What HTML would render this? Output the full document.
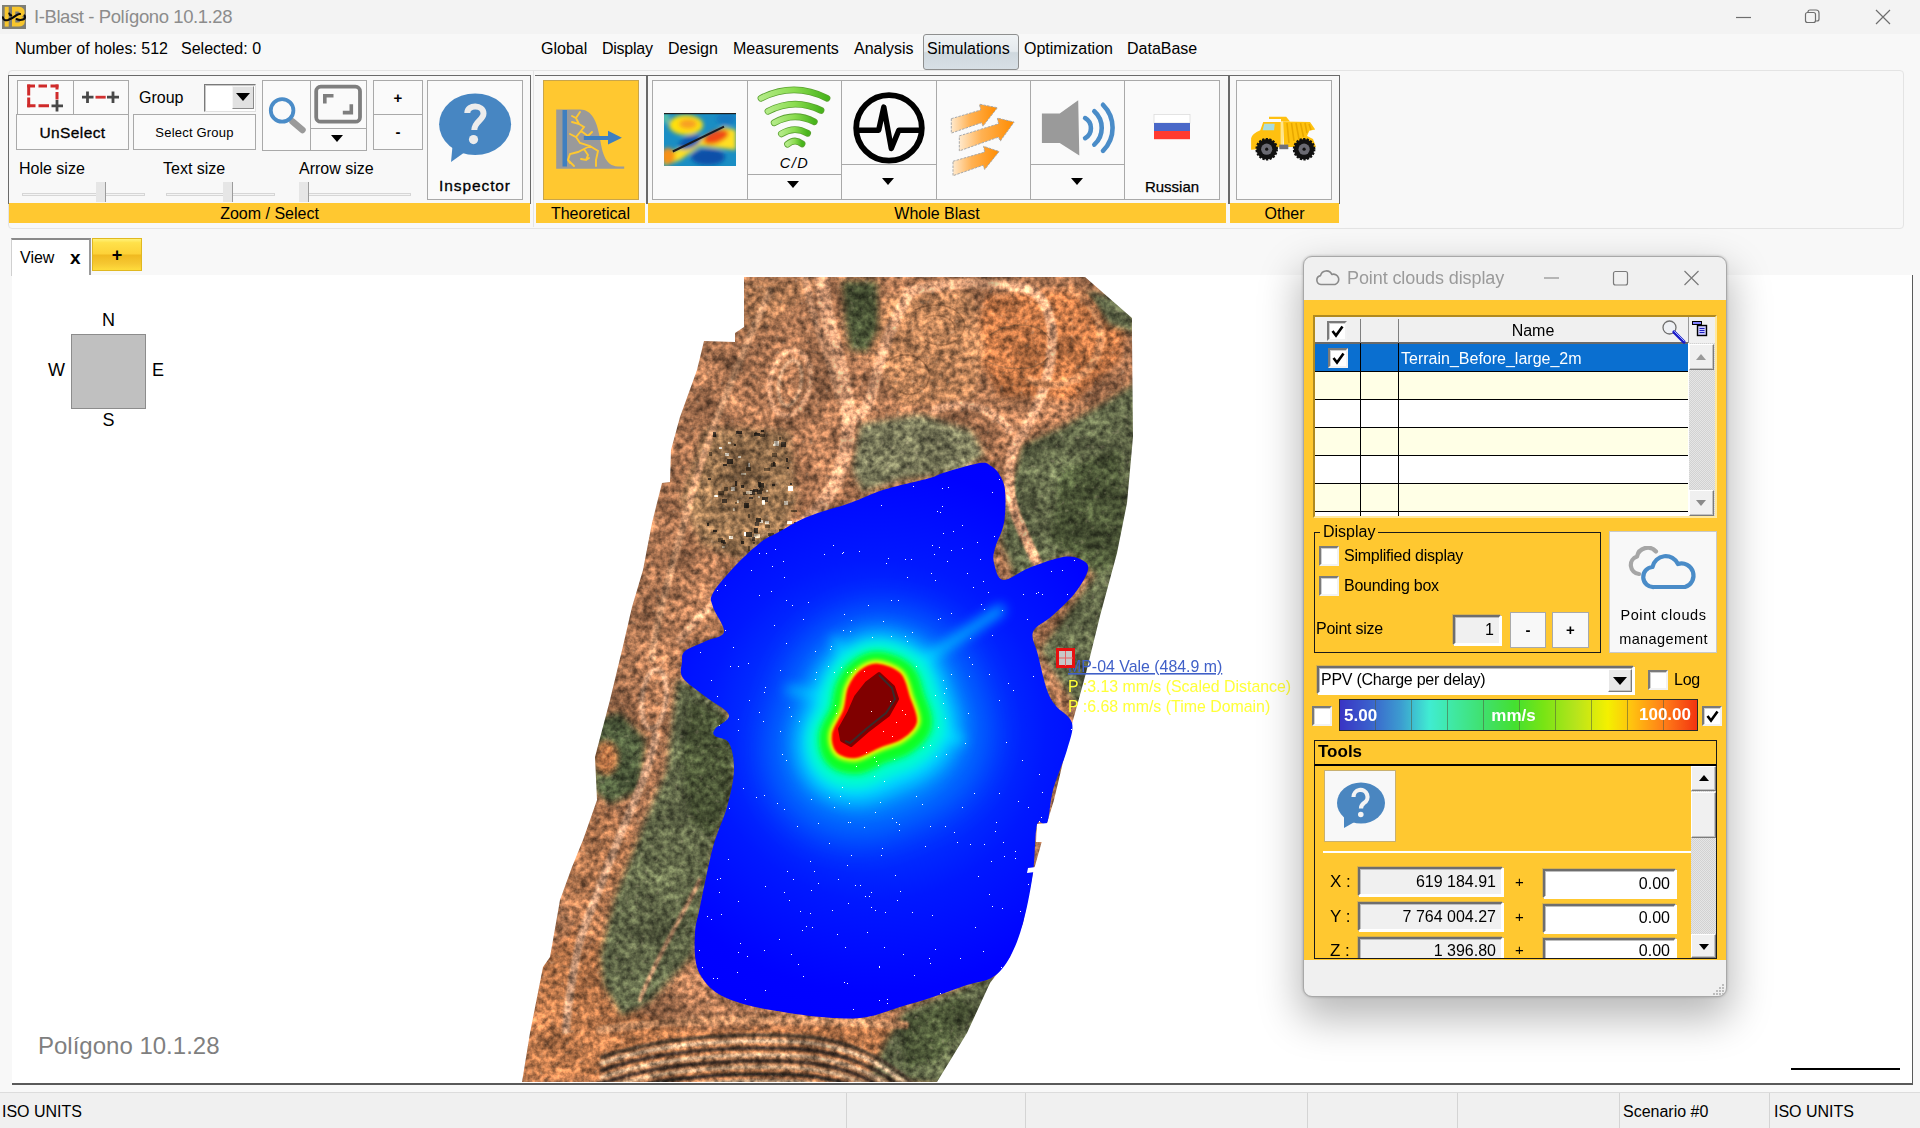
<!DOCTYPE html>
<html><head><meta charset="utf-8">
<style>
*{box-sizing:border-box;margin:0;padding:0}
html,body{width:1920px;height:1128px;overflow:hidden;background:#f8f8f8;font-family:"Liberation Sans",sans-serif;font-size:16px;color:#000}
.abs,.abs *{position:absolute}
#root{position:absolute;left:0;top:0;width:1920px;height:1128px;overflow:hidden}
.t{white-space:nowrap;line-height:1}
/* title bar */
#titlebar{left:0;top:0;width:1920px;height:34px;background:#f3f3f3}
/* ribbon */
#ribbon{left:8px;top:70px;width:1896px;height:159px;border:1px solid #e4e4e4;border-radius:4px;background:#f8f8f8}
.grp{border:1px solid #6a6a6a;border-bottom:none;background:#f8f8f8}
.gbar{background:#ffc830;height:20px;text-align:center;font-size:16px;line-height:22px}
.btn{border:1px solid #a9a9a9;background:#fafafa}
.cm{font-family:"Liberation Sans",sans-serif}
/* status */
#status{left:0;top:1092px;width:1920px;height:36px;background:#f0f0f0;border-top:1px solid #dcdcdc}
#status .sep{top:0;width:1px;height:36px;background:#d4d4d4}
/* view */
#view{left:12px;top:275px;width:1901px;height:810px;background:#fff;border-right:1px solid #5a5a5a;border-bottom:2px solid #5a5a5a;overflow:hidden}
</style></head><body>
<div id="root" class="abs">

<!-- TITLE BAR -->
<div id="titlebar">
  <svg style="left:2px;top:5px" width="24" height="24" viewBox="0 0 24 24"><rect x="0" y="0" width="24" height="24" fill="#7e7e76"/><rect x="2.700" y="1.800" width="4" height="19.800" fill="#f8c62c"/><path d="M10 1.800 H17 Q22.600 2.200 22.600 7.500 Q22.600 11 19.500 11.800 Q23 12.800 22.800 16.500 Q22.500 21.600 16.500 21.600 H10 Z M13.300 6.500 V10 H16 Q17.800 9.800 17.800 8.200 Q17.800 6.600 16 6.500 Z M13.300 13.500 V17.500 H16.500 Q18.400 17.300 18.400 15.500 Q18.400 13.600 16.500 13.500 Z" fill="#f8c62c" fill-rule="evenodd"/><path d="M0.800 12.200 Q1.500 16 6 15 Q10 13.500 13.500 10.800 Q16.500 8.600 18 9 M7.300 8.600 Q7.800 10.600 9.200 10.400 M22.600 10.500 Q24.200 14.800 18.500 15 Q16 15 14.800 14.200" fill="none" stroke="#0a0a0a" stroke-width="2.100" stroke-linecap="round"/></svg>
  <div class="t" style="left:34px;top:8px;font-size:18.5px;letter-spacing:-0.41px;color:#8c8c8c">I-Blast - Polígono 10.1.28</div>
  <svg style="left:1734px;top:8px" width="160" height="20" viewBox="0 0 160 20" fill="none" stroke="#6e6e6e" stroke-width="1.2"><path d="M2 9.500 H17"/><rect x="71.500" y="4.500" width="10" height="10" rx="2"/><path d="M74 4.500 v-1 a2 2 0 0 1 2 -1.500 h6 a3 3 0 0 1 3 3 v6 a2 2 0 0 1 -2 2 h-1"/><path d="M142 2 L156 16 M156 2 L142 16"/></svg>
</div>

<!-- MENU ROW -->
<div id="menurow" style="left:0;top:34px;width:1920px;height:36px">
  <div class="t" style="left:15px;top:7px">Number of holes: 512</div>
  <div class="t" style="left:181px;top:7px">Selected: 0</div>
  <div style="left:923px;top:0px;width:96px;height:36px;border:1px solid #8e8f8f;border-radius:3px;background:linear-gradient(#f0f3f5 0%,#e4e9ed 48%,#cfd8de 52%,#d8e0e6 100%)"></div>
  <div class="t" style="left:541px;top:7px">Global</div>
  <div class="t" style="left:602px;top:7px;letter-spacing:-0.25px">Display</div>
  <div class="t" style="left:668px;top:7px">Design</div>
  <div class="t" style="left:733px;top:7px">Measurements</div>
  <div class="t" style="left:854px;top:7px">Analysis</div>
  <div class="t" style="left:927px;top:7px">Simulations</div>
  <div class="t" style="left:1024px;top:7px">Optimization</div>
  <div class="t" style="left:1127px;top:7px">DataBase</div>
</div>

<!-- RIBBON -->
<div id="ribbon"></div>
<!-- GROUP 1: Zoom / Select -->
<div class="grp" style="left:8px;top:75px;width:523px;height:129px"></div>
<div class="gbar" style="left:9px;top:203px;width:521px">Zoom / Select</div>
<div class="btn" style="left:17px;top:80px;width:57px;height:35px"></div>
<div class="btn" style="left:73px;top:80px;width:56px;height:35px"></div>
<div class="btn" style="left:16px;top:114px;width:113px;height:36px"></div>
<div class="t cm" style="left:16px;top:125px;width:113px;text-align:center;font-size:15.5px;-webkit-text-stroke:0.3px #000;letter-spacing:0.4px">UnSelect</div>
<div class="t" style="left:139px;top:90px">Group</div>
<div style="left:204px;top:84px;width:52px;height:28px;background:#fff;border:1px solid #7a7a7a;border-right-color:#e0e0e0;border-bottom-color:#e0e0e0;box-shadow:inset 1px 1px 0 #c8c8c8"></div>
<div style="left:232px;top:86px;width:22px;height:23px;background:#e1e1e1;border:1px solid #f5f5f5;border-right-color:#8a8a8a;border-bottom-color:#8a8a8a"></div>
<svg style="left:236px;top:93px" width="14" height="8"><path d="M0 0 H14 L7 8 Z" fill="#000"/></svg>
<div class="btn" style="left:133px;top:114px;width:123px;height:36px"></div>
<div class="t cm" style="left:133px;top:126px;width:123px;text-align:center;font-size:13px;letter-spacing:0.2px">Select Group</div>
<div class="btn" style="left:262px;top:80px;width:49px;height:71px"></div>
<div class="btn" style="left:310px;top:80px;width:57px;height:49px"></div>
<div class="btn" style="left:310px;top:128px;width:57px;height:23px"></div>
<svg style="left:331px;top:135px" width="12" height="7"><path d="M0 0 H12 L6 7 Z" fill="#000"/></svg>
<div class="btn" style="left:373px;top:80px;width:50px;height:35px"></div>
<div class="btn" style="left:373px;top:114px;width:50px;height:36px"></div>
<div class="t" style="left:373px;top:90px;width:50px;text-align:center;font-size:15px;font-weight:bold">+</div>
<div class="t" style="left:373px;top:124px;width:50px;text-align:center;font-size:15px;font-weight:bold">-</div>
<div class="btn" style="left:427px;top:80px;width:96px;height:120px"></div>
<div class="t cm" style="left:427px;top:178px;width:96px;text-align:center;font-size:15.5px;-webkit-text-stroke:0.3px #000;letter-spacing:0.9px">Inspector</div>
<div class="t" style="left:19px;top:161px">Hole size</div>
<div class="t" style="left:163px;top:161px">Text size</div>
<div class="t" style="left:299px;top:161px">Arrow size</div>
<!-- sliders -->
<div style="left:22px;top:193px;width:123px;height:3px;background:#f4f4f4;border:1px solid #d6d6d6"></div>
<div style="left:96px;top:182px;width:10px;height:20px;background:#e6e6e6;border-right:1px solid #9c9c9c"></div>
<div style="left:166px;top:193px;width:109px;height:3px;background:#f4f4f4;border:1px solid #d6d6d6"></div>
<div style="left:223px;top:182px;width:10px;height:20px;background:#e6e6e6;border-right:1px solid #9c9c9c"></div>
<div style="left:299px;top:193px;width:112px;height:3px;background:#f4f4f4;border:1px solid #d6d6d6"></div>
<div style="left:299px;top:182px;width:10px;height:20px;background:#e6e6e6;border-right:1px solid #9c9c9c"></div>
<!--ICONS-G1-->

<!-- GROUP 2: Theoretical -->
<div style="left:533px;top:71px;width:1px;height:156px;background:#e4e4e4"></div>
<div class="grp" style="left:535px;top:75px;width:112px;height:129px;border-left:none"></div>
<div class="gbar" style="left:536px;top:203px;width:109px">Theoretical</div>
<div style="left:543px;top:80px;width:96px;height:120px;background:#ffc830;border:1px solid #c9a54a"></div>
<!--ICONS-G2-->

<!-- GROUP 3: Whole Blast -->
<div class="grp" style="left:646px;top:75px;width:583px;height:129px;border-left-width:2px"></div>
<div class="gbar" style="left:648px;top:203px;width:578px">Whole Blast</div>
<div class="btn" style="left:652px;top:80px;width:96px;height:120px"></div>
<div class="btn" style="left:747px;top:80px;width:95px;height:95px"></div>
<div class="btn" style="left:747px;top:174px;width:95px;height:26px"></div>
<div class="btn" style="left:841px;top:80px;width:96px;height:85px"></div>
<div class="btn" style="left:841px;top:164px;width:96px;height:36px"></div>
<div class="btn" style="left:936px;top:80px;width:95px;height:120px"></div>
<div class="btn" style="left:1030px;top:80px;width:95px;height:85px"></div>
<div class="btn" style="left:1030px;top:164px;width:95px;height:36px"></div>
<div class="btn" style="left:1124px;top:80px;width:96px;height:120px"></div>
<svg style="left:787px;top:181px" width="12" height="7"><path d="M0 0 H12 L6 7 Z" fill="#000"/></svg>
<svg style="left:882px;top:178px" width="12" height="7"><path d="M0 0 H12 L6 7 Z" fill="#000"/></svg>
<svg style="left:1071px;top:178px" width="12" height="7"><path d="M0 0 H12 L6 7 Z" fill="#000"/></svg>
<div class="t cm" style="left:747px;top:156px;width:95px;text-align:center;font-size:14.5px;letter-spacing:1.5px;font-style:italic">C/D</div>
<div class="t cm" style="left:1124px;top:179px;width:96px;text-align:center;font-size:15px;-webkit-text-stroke:0.25px #000;letter-spacing:0px">Russian</div>
<!--ICONS-G3-->

<!-- GROUP 4: Other -->
<div class="grp" style="left:1228px;top:75px;width:112px;height:129px;border-left-width:2px"></div>
<div class="gbar" style="left:1230px;top:203px;width:109px">Other</div>
<div class="btn" style="left:1236px;top:80px;width:96px;height:120px"></div>
<!--ICONS-START--><svg style="left:0;top:0;pointer-events:none" width="1920" height="240" viewBox="0 0 1920 240">
<defs>
<linearGradient id="og" x1="0" y1="0" x2="1" y2="0"><stop offset="0" stop-color="#ffe9cc"/><stop offset="0.4" stop-color="#ffb254"/><stop offset="1" stop-color="#ff8c00"/></linearGradient>
<linearGradient id="gg" x1="0" y1="0" x2="1" y2="0"><stop offset="0" stop-color="#b2ea86"/><stop offset="0.5" stop-color="#8bdc50"/><stop offset="1" stop-color="#48b41c"/></linearGradient>
<clipPath id="cmc"><rect x="664" y="113" width="72" height="53"/></clipPath>
<filter id="ib3" x="-50%" y="-50%" width="200%" height="200%"><feGaussianBlur stdDeviation="2.2"/></filter>
<filter id="ib5" x="-50%" y="-50%" width="200%" height="200%"><feGaussianBlur stdDeviation="2"/></filter>
</defs>
<g fill="none" stroke="#cf2a2a" stroke-width="3">
<path d="M27.200 86 H35 M38.500 86 H47 M50.500 86 H58.500"/>
<path d="M28.700 84.500 V95.500 M28.700 97.500 V107.300"/>
<path d="M57 84.500 V89.500 M57 92 V99.500"/>
<path d="M27.200 105.800 H35.500 M38.500 105.800 H49"/>
</g>
<path d="M51.500 105.800 H63 M57 100 V111.500" stroke="#484848" stroke-width="2.800" fill="none"/>
<path d="M82 97.200 H93.500 M87.500 91.500 V103 M107 97.200 H119 M113 91.500 V103" stroke="#484848" stroke-width="2.800" fill="none"/>
<path d="M95.500 97.200 H105.700" stroke="#d03030" stroke-width="2.800"/>
<path d="M292.500 121.500 L302.500 130" stroke="#9a9a9a" stroke-width="6.500" stroke-linecap="round"/>
<circle cx="282.100" cy="110.400" r="11.300" fill="#fafafa" stroke="#4a8cc8" stroke-width="3.800"/>
<rect x="316.200" y="86.700" width="43.800" height="35" rx="4.500" fill="none" stroke="#7e7e7e" stroke-width="3.800"/>
<path d="M324.800 103.600 V95.700 H333.500 M351.300 104.300 V112.600 H342.800" fill="none" stroke="#7e7e7e" stroke-width="3.600"/>
<ellipse cx="475.100" cy="124.200" rx="36" ry="30.800" fill="#4786c2"/><path d="M452.500 146 L451 162 L465 152 Z" fill="#4786c2"/>
<path d="M467.300 113 C467.300 104 483.500 104.500 483.500 113.500 C483.500 120 474.300 121.500 474.300 130" fill="none" stroke="#ececec" stroke-width="6"/>
<circle cx="473.500" cy="139.600" r="4.600" fill="#ececec"/>
<path d="M556.200 109.400 H580 C592 109.400 597 122 599.500 136 C602 150 604 166 618 166.500 H624.200 V168.800 H556.200 Z" fill="#9a9a9a"/>
<rect x="562.500" y="110" width="4.500" height="56.500" fill="#3f7fc0"/>
<g fill="none" stroke="#ffc830" stroke-width="1.900" stroke-linecap="round">
<path d="M580 112 L576 118 L572 116 M576 118 L579 124 L572 122 M579 124 L584 127 L581 131 L588 136 L592 132 M581 131 L576 137 L570 134 M576 137 L580 143 L590 146 L598 151 L596 160 L596 166 M590 146 L584 149 L578 152 L570 154 L568 160 L574 166 M568 160 L570 163 M584 149 L588 155 L586 160 L581 159 M586 160 L589 158"/>
</g>
<path d="M583.800 135.900 H608 V130.800 L621.900 137.700 L608 144.600 V140 H583.800 Z" fill="#3f7fc0"/>
<g clip-path="url(#cmc)">
<rect x="664" y="113" width="72" height="53" fill="#1a8ec4"/>
<g filter="url(#ib3)">
<ellipse cx="686" cy="125" rx="17" ry="10" fill="#ffe010"/>
<ellipse cx="688" cy="124" rx="9" ry="5" fill="#f8a020"/>
<polygon points="672,152 724,127 736,130 736,150 700,146 680,160 664,166 664,150" fill="#ffe020"/>
<ellipse cx="716" cy="137" rx="13" ry="6" fill="#f04818" transform="rotate(-20 716 137)"/>
<ellipse cx="668" cy="156" rx="7" ry="8" fill="#f89018"/>
<ellipse cx="708" cy="157" rx="17" ry="8" fill="#0a50a8"/>
<ellipse cx="690" cy="142" rx="12" ry="6" fill="#0a58b0" transform="rotate(-25 690 142)"/>
<ellipse cx="726" cy="119" rx="10" ry="6" fill="#1478c0"/>
<ellipse cx="666" cy="118" rx="3" ry="6" fill="#60c8a0"/>
</g>
<path d="M672.800 151.500 L724 126.700" stroke="#1a1a20" stroke-width="2"/>
<rect x="664" y="113" width="72" height="1.200" fill="#202020"/>
</g>
<path d="M761 98.2 Q794.0 81.6 827 98.2" fill="none" stroke="#5aa030" stroke-width="6.800" stroke-linecap="round"/>
<path d="M761 98.2 Q794.0 81.6 827 98.2" fill="none" stroke="url(#gg)" stroke-width="5.200" stroke-linecap="round"/>
<path d="M768 111.2 Q794.5 97.4 821 110.4" fill="none" stroke="#5aa030" stroke-width="6.800" stroke-linecap="round"/>
<path d="M768 111.2 Q794.5 97.4 821 110.4" fill="none" stroke="url(#gg)" stroke-width="5.200" stroke-linecap="round"/>
<path d="M774.2 122.8 Q794.2 111.3 814.3 121.8" fill="none" stroke="#5aa030" stroke-width="6.800" stroke-linecap="round"/>
<path d="M774.2 122.8 Q794.2 111.3 814.3 121.8" fill="none" stroke="url(#gg)" stroke-width="5.200" stroke-linecap="round"/>
<path d="M781.4 133.8 Q794.5 125.6 807.6 133.3" fill="none" stroke="#5aa030" stroke-width="6.800" stroke-linecap="round"/>
<path d="M781.4 133.8 Q794.5 125.6 807.6 133.3" fill="none" stroke="url(#gg)" stroke-width="5.200" stroke-linecap="round"/>
<path d="M787.6 144.2 Q794.8 138.2 802 143.8" fill="none" stroke="#5aa030" stroke-width="6.800" stroke-linecap="round"/>
<path d="M787.6 144.2 Q794.8 138.2 802 143.8" fill="none" stroke="url(#gg)" stroke-width="5.200" stroke-linecap="round"/>
<circle cx="889" cy="127.900" r="32.800" fill="none" stroke="#000" stroke-width="5.800"/>
<path d="M858.500 130.200 H878.700 L883.800 107.100 L891.300 148.600 L898.800 130.200 H919" fill="none" stroke="#000" stroke-width="5.400" stroke-linejoin="round" stroke-linecap="round"/>
<polygon points="951.3,118.7 980.7,110 979.5,104.2 997.4,107.7 983,126.1 981.5,122.7 951.3,133.1" fill="url(#og)" stroke="#a8a8a8" stroke-width="1" stroke-dasharray="2.500 1.200"/>
<polygon points="959.3,135.9 998.5,123.8 997.4,118.1 1014.1,122.1 1000.3,141.1 998.5,137.1 959.3,150.9" fill="url(#og)" stroke="#a8a8a8" stroke-width="1" stroke-dasharray="2.500 1.200"/>
<polygon points="953,161.3 984.7,152.1 983.6,146.3 999.1,151.5 984.7,169.4 983,165.3 953,175.7" fill="url(#og)" stroke="#a8a8a8" stroke-width="1" stroke-dasharray="2.500 1.200"/>
<polygon points="1041.9,113.500 1059.700,113.500 1078.200,100.200 1079.300,155.500 1059.700,142.900 1041.900,142.900" fill="#9a9a9a"/>
<g fill="none" stroke="#4a8cc8" stroke-width="4.600" stroke-linecap="round">
<path d="M1085.100 118.100 A11.600 11.600 0 0 1 1085.100 138.200"/>
<path d="M1094.300 111.200 A22.500 22.500 0 0 1 1094.300 144.600"/>
<path d="M1103 104.800 A32.500 32.500 0 0 1 1103 150.900"/>
</g>
<rect x="1154" y="114.500" width="36" height="8.500" fill="#ffffff" stroke="#dcdcdc" stroke-width="0.800"/><rect x="1154" y="123" width="36" height="8" fill="#4a68c8"/><rect x="1154" y="131" width="36" height="8.200" fill="#ff3a30"/>
<g>
<path d="M1269 116.800 H1286.200 L1290 121.500 H1281 V119 H1269 Z" fill="#ffc010"/>
<polygon points="1283,121.500 1310,122.100 1315.200,129.600 1309.300,130.800 1307,135.900 1313,139 1316,147 1284,147" fill="#ffc20e"/>
<g stroke="#e9a800" stroke-width="1.600"><path d="M1287 123 L1289 143 M1291.500 123 L1294 141 M1296 123 L1299 139 M1300.500 123 L1303.500 137 M1305 123 L1307 133 M1309 124 L1311 130"/></g>
<path d="M1251.100 149.800 L1251.100 138.200 Q1252 133.600 1260.300 130.200 L1263.200 122.100 H1281.600 V147 Z" fill="#ffc010"/>
<rect x="1280.600" y="122" width="2.600" height="23" fill="#ffe58a"/>
<polygon points="1264.300,123.800 1274.700,123.800 1274.100,130.200 1262.600,130.200" fill="#a8dce0"/>
<rect x="1279.300" y="144.600" width="9" height="4.600" fill="#70707a"/>
<circle cx="1266.7" cy="149.200" r="10.200" fill="#111" stroke="#111" stroke-width="2.200" stroke-dasharray="2.200 1.400"/>
<circle cx="1266.7" cy="149.200" r="5.600" fill="#6a6a72"/><circle cx="1266.7" cy="149.200" r="1.600" fill="#111"/>
<circle cx="1304.1" cy="149.200" r="10.200" fill="#111" stroke="#111" stroke-width="2.200" stroke-dasharray="2.200 1.400"/>
<circle cx="1304.1" cy="149.200" r="5.600" fill="#6a6a72"/><circle cx="1304.1" cy="149.200" r="1.600" fill="#111"/>
</g>
</svg><!--ICONS-END-->


<!-- TABS -->
<div style="left:11px;top:238px;width:80px;height:38px;background:#fff;border:1px solid #d0d0d0;border-top:2px solid #8a8a8a;border-right:2px solid #9a9a9a;border-bottom:none"></div>
<div class="t" style="left:20px;top:250px">View</div>
<div class="t" style="left:70px;top:248px;font-size:19px;font-weight:bold">x</div>
<div style="left:92px;top:238px;width:50px;height:33px;border:1px solid #e0b820;background:linear-gradient(#fff27a 0%,#ffe14a 12%,#fdd238 48%,#f0b920 52%,#f6c832 80%,#ffdc3c 100%)"></div>
<div class="t" style="left:92px;top:246px;width:50px;text-align:center;font-size:18px;font-weight:bold">+</div>


<!-- VIEW -->
<div id="view">
<!--MAP-START--><svg style="left:-12px;top:-275px" width="1920" height="1128" viewBox="0 0 1920 1128">
<defs>
<clipPath id="tc"><polygon points="744,277 1085,277 1132,318 1132,337 1133,437 1127,503 1117,553 1100,616 1086,673 1072,724 1054,800 1047,823 1033,873 1023,923 1010,957 990,983 967,1033 937,1082 522,1082 530,1033 543,967 550,957 560,900 572,867 583,840 597,800 595,757 610,700 623,646 632,607 643,570 652,523 662,483 670,482 671,450 680,417 697,370 704,341 735,342 735,333 744,327"/></clipPath>
<clipPath id="bc"><path d="M980,463 C988.0,461.8 987.8,464.2 991,466 C994.2,467.8 996.7,470.0 999,474 C1001.3,478.0 1004.2,481.8 1005,490 C1005.8,498.2 1005.7,513.3 1004,523 C1002.3,532.7 996.7,541.3 995,548 C993.3,554.7 992.7,557.7 994,563 C995.3,568.3 997.2,579.2 1003,580 C1008.8,580.8 1019.0,571.8 1029,568 C1039.0,564.2 1054.2,558.3 1063,557 C1071.8,555.7 1077.8,557.8 1082,560 C1086.2,562.2 1089.2,564.5 1088,570 C1086.8,575.5 1081.0,585.3 1075,593 C1069.0,600.7 1059.0,609.5 1052,616 C1045.0,622.5 1035.3,625.5 1033,632 C1030.7,638.5 1035.7,645.3 1038,655 C1040.3,664.7 1044.0,681.5 1047,690 C1050.0,698.5 1051.8,700.5 1056,706 C1060.2,711.5 1070.2,715.7 1072,723 C1073.8,730.3 1070.2,738.8 1067,750 C1063.8,761.2 1056.3,777.8 1053,790 C1049.7,802.2 1049.7,817.2 1047,823 C1044.3,828.8 1039.3,816.7 1037,825 C1034.7,833.3 1035.3,856.7 1033,873 C1030.7,889.3 1026.8,909.0 1023,923 C1019.2,937.0 1015.0,948.0 1010,957 C1005.0,966.0 1000.2,972.3 993,977 C985.8,981.7 977.0,981.7 967,985 C957.0,988.3 944.2,993.3 933,997 C921.8,1000.7 911.0,1003.7 900,1007 C889.0,1010.3 878.2,1015.2 867,1017 C855.8,1018.8 847.0,1018.8 833,1018 C819.0,1017.2 798.5,1014.5 783,1012 C767.5,1009.5 751.7,1006.7 740,1003 C728.3,999.3 720.2,996.0 713,990 C705.8,984.0 700.0,976.5 697,967 C694.0,957.5 694.5,943.0 695,933 C695.5,923.0 697.0,921.3 700,907 C703.0,892.7 708.5,863.7 713,847 C717.5,830.3 723.5,819.8 727,807 C730.5,794.2 733.7,780.7 734,770 C734.3,759.3 732.2,748.7 729,743 C725.8,737.3 717.3,738.3 715,736 C712.7,733.7 712.7,732.5 715,729 C717.3,725.5 730.5,720.3 729,715 C727.5,709.7 713.7,703.2 706,697 C698.3,690.8 687.0,683.8 683,678 C679.0,672.2 681.7,666.5 682,662 C682.3,657.5 681.0,654.5 685,651 C689.0,647.5 699.5,644.2 706,641 C712.5,637.8 722.8,637.7 724,632 C725.2,626.3 714.8,613.5 713,607 C711.2,600.5 709.2,600.0 713,593 C716.8,586.0 728.0,573.5 736,565 C744.0,556.5 754.2,547.3 761,542 C767.8,536.7 769.3,537.2 777,533 C784.7,528.8 794.8,522.0 807,517 C819.2,512.0 837.3,507.5 850,503 C862.7,498.5 869.7,494.2 883,490 C896.3,485.8 920.0,480.8 930,478 C940.0,475.2 934.7,475.5 943,473 C951.3,470.5 972.0,464.2 980,463Z"/></clipPath>
<filter id="tex" filterUnits="userSpaceOnUse" x="500" y="270" width="660" height="820" color-interpolation-filters="sRGB"><feTurbulence type="fractalNoise" baseFrequency="0.16" numOctaves="3" seed="5" result="n"/><feColorMatrix in="n" type="matrix" values="1.5 0 0 0 -0.25  1.5 0 0 0 -0.25  1.5 0 0 0 -0.25  0 0 0 0 1" result="g"/><feTurbulence type="fractalNoise" baseFrequency="0.025 0.035" numOctaves="3" seed="17" result="n2"/><feColorMatrix in="n2" type="matrix" values="0 1.4 0 0 -0.2  0 1.4 0 0 -0.2  0 1.4 0 0 -0.2  0 0 0 0 1" result="g2"/><feComposite in="SourceGraphic" in2="g" operator="arithmetic" k1="0.9" k2="0.55" k3="0" k4="0" result="t1"/><feComposite in="t1" in2="g2" operator="arithmetic" k1="0.6" k2="0.7" k3="0" k4="0"/></filter>
<filter id="nzL" x="0" y="0" width="100%" height="100%"><feTurbulence type="fractalNoise" baseFrequency="0.035 0.045" numOctaves="3" seed="11"/><feColorMatrix type="matrix" values="0 0 0 0 0.2  0 0 0 0 0.12  0 0 0 0 0.06  0 2.4 0 0 -1.1"/></filter>
<filter id="nzD" x="0" y="0" width="100%" height="100%"><feTurbulence type="fractalNoise" baseFrequency="0.16" numOctaves="2" seed="3"/><feColorMatrix type="matrix" values="0 0 0 0 0.17  0 0 0 0 0.12  0 0 0 0 0.07  2.6 0 0 0 -1.2"/></filter>
<filter id="nzH" x="0" y="0" width="100%" height="100%"><feTurbulence type="fractalNoise" baseFrequency="0.2" numOctaves="2" seed="29"/><feColorMatrix type="matrix" values="0 0 0 0 0.93  0 0 0 0 0.74  0 0 0 0 0.55  0 2.2 0 0 -1.38"/></filter>
<filter id="b3" filterUnits="userSpaceOnUse" x="480" y="250" width="700" height="860"><feGaussianBlur stdDeviation="3"/></filter><filter id="b6" filterUnits="userSpaceOnUse" x="480" y="250" width="700" height="860"><feGaussianBlur stdDeviation="6"/></filter><filter id="b10" filterUnits="userSpaceOnUse" x="480" y="250" width="700" height="860"><feGaussianBlur stdDeviation="10"/></filter><filter id="b18" filterUnits="userSpaceOnUse" x="480" y="250" width="700" height="860"><feGaussianBlur stdDeviation="18"/></filter><filter id="b1" filterUnits="userSpaceOnUse" x="480" y="250" width="700" height="860"><feGaussianBlur stdDeviation="1.2"/></filter><filter id="b2" filterUnits="userSpaceOnUse" x="480" y="250" width="700" height="860"><feGaussianBlur stdDeviation="2"/></filter>
<radialGradient id="bg" gradientUnits="userSpaceOnUse" cx="875" cy="730" r="310"><stop offset="0" stop-color="#00b0ff"/><stop offset="0.14" stop-color="#0070ff"/><stop offset="0.3" stop-color="#003cff"/><stop offset="0.55" stop-color="#0018ff"/><stop offset="0.85" stop-color="#0002ff"/><stop offset="1" stop-color="#0000ff"/></radialGradient>
</defs>
<g clip-path="url(#tc)"><g filter="url(#tex)">
<rect x="500" y="270" width="660" height="820" fill="#a87250"/>
<g filter="url(#b3)">
<polygon points="985,296 1075,290 1128,318 1120,360 1075,400 1000,396 975,350" fill="#c27444"/>
<polygon points="885,296 972,290 985,350 975,400 900,405 872,360" fill="#bd8258"/>
<polygon points="700,345 760,330 800,300 815,280 745,280 740,335" fill="#b47c54"/>
<polygon points="540,960 600,900 625,1010 700,1030 900,1020 930,1082 520,1082" fill="#b8744a"/>
<polygon points="560,880 600,800 640,840 620,900 585,960" fill="#b27650"/>
<polygon points="1022,445 1060,428 1100,405 1140,380 1140,660 1085,720 1040,650 1095,575 1075,552 1015,578 1000,540 1012,480" fill="#5e6646"/>
<polygon points="1060,470 1120,450 1130,560 1095,575 1050,540" fill="#4a5236"/>
<polygon points="842,281 877,281 880,330 868,352 850,350 845,320" fill="#4a5236"/>
<polygon points="860,424 920,414 972,430 985,455 960,472 900,480 862,492 852,470" fill="#7c7c5c"/>
<polygon points="1085,291 1136,300 1136,335 1108,326" fill="#5e6646"/>
<polygon points="677,679 705,690 725,711 740,740 736,770 730,810 717,837 701,915 693,955 650,1002 622,1018 602,985 599,955 614,896 638,837 666,770" fill="#5e6646"/>
<polygon points="690,700 730,720 735,790 715,840 690,820 680,760" fill="#4a5236"/>
<polygon points="595,719 620,712 646,740 640,790 610,805 593,790" fill="#4e5a3a"/>
<polygon points="868,1078 885,1040 905,1010 940,996 992,975 1002,985 960,1062 945,1085" fill="#5e6646"/>
<polygon points="900,1020 960,995 975,1010 940,1060 905,1070" fill="#4a5236"/>
<polygon points="705,426 790,430 798,500 780,545 740,560 700,545 680,500" fill="#94704e"/>
<ellipse cx="606" cy="758" rx="10" ry="15" fill="#e08a52"/>
</g>
<g fill="none" stroke-linecap="round" filter="url(#b1)">
<path d="M822,277 C824,320 838,352 845,388 C851,420 848,450 838,476 C828,505 790,540 745,585" stroke="#e4a47c" stroke-width="14"/>
<path d="M805,277 C812,320 830,360 838,395" stroke="#c8906c" stroke-width="7"/>
<path d="M912,290 C890,320 880,360 870,400 C866,410 860,416 852,420" stroke="#e4a47c" stroke-width="11"/>
<path d="M908,292 C940,282 1000,280 1030,290 C1050,300 1056,330 1050,363 C1045,395 1032,420 1015,445 C1005,470 1008,500 1020,525 C1028,545 1036,560 1040,570" stroke="#e4a47c" stroke-width="10"/>
<path d="M935,410 C960,400 990,405 1010,430" stroke="#e4a47c" stroke-width="8"/>
<path d="M1070,290 C1095,300 1110,330 1095,360 C1080,385 1050,390 1030,380" stroke="#d08a5c" stroke-width="8"/>
<ellipse cx="790" cy="383" rx="20" ry="33" stroke="#e4a47c" stroke-width="5" transform="rotate(10 790 383)"/>
<ellipse cx="790" cy="383" rx="11" ry="23" stroke="#c49a78" stroke-width="3" transform="rotate(10 790 383)"/>
<path d="M770,290 C745,350 712,420 690,500 C672,570 655,620 652,660" stroke="#c08c68" stroke-width="7"/>
<ellipse cx="654" cy="699" rx="12" ry="30" stroke="#c49474" stroke-width="5" transform="rotate(6 654 699)"/>
<path d="M656,735 C650,770 630,810 620,835 C605,875 590,910 580,940 C572,975 568,1000 566,1030" stroke="#c49474" stroke-width="8"/>
<path d="M700,880 C680,920 655,960 640,1000" stroke="#b88a68" stroke-width="4"/>
<path d="M740,590 C720,600 700,610 680,640" stroke="#e4a47c" stroke-width="8"/>
<path d="M600,1030 C700,1015 800,1020 905,1025" stroke="#c88c62" stroke-width="8"/>
</g>
<g fill="none" stroke="#8a5c3c" stroke-width="1.500" opacity="0.7">
<path d="M915,310 C935,300 960,305 965,325 C962,345 940,350 925,340"/><path d="M925,318 C940,312 955,318 955,330"/><path d="M890,360 C905,350 925,355 930,375 C928,392 912,398 900,392"/>
<path d="M990,335 C1010,320 1040,322 1050,340"/><path d="M985,360 C1005,372 1035,372 1048,358"/>
</g>
<g fill="none" filter="url(#b1)">
<path d="M600,1058 C650,1040 720,1032 800,1036 C850,1040 885,1058 915,1086" stroke="#4a3a2e" stroke-width="4"/>
<path d="M600,1064 C650,1046 720,1038 800,1042 C850,1046 885,1064 915,1092" stroke="#d2ae8c" stroke-width="4"/>
<path d="M600,1071 C650,1053 720,1045 800,1049 C850,1053 885,1071 915,1099" stroke="#3a2e26" stroke-width="4"/>
<path d="M600,1078 C650,1060 720,1052 800,1056 C850,1060 885,1078 915,1106" stroke="#caa684" stroke-width="4"/>
<path d="M600,1084 C650,1066 720,1058 800,1062 C850,1066 885,1084 915,1112" stroke="#40322a" stroke-width="4"/>
<path d="M600,1090 C650,1072 720,1064 800,1068 C850,1072 885,1090 915,1118" stroke="#c4a07e" stroke-width="4"/>
<path d="M600,1097 C650,1079 720,1071 800,1075 C850,1079 885,1097 915,1125" stroke="#2e2620" stroke-width="4"/>
<path d="M600,1104 C650,1086 720,1078 800,1082 C850,1086 885,1104 915,1132" stroke="#b89878" stroke-width="4"/>
</g>
<g>
<rect x="734" y="444" width="2" height="2" fill="#1e1a16" opacity="0.85"/>
<rect x="779" y="437" width="2" height="3" fill="#463626" opacity="0.85"/>
<rect x="708" y="478" width="3" height="2" fill="#1e1a16" opacity="0.85"/>
<rect x="755" y="432" width="2" height="3" fill="#463626" opacity="0.85"/>
<rect x="762" y="497" width="6" height="5" fill="#1e1a16" opacity="0.85"/>
<rect x="709" y="452" width="3" height="4" fill="#463626" opacity="0.85"/>
<rect x="743" y="492" width="4" height="3" fill="#463626" opacity="0.85"/>
<rect x="714" y="495" width="4" height="2" fill="#eee6d8" opacity="0.85"/>
<rect x="754" y="433" width="6" height="3" fill="#1e1a16" opacity="0.85"/>
<rect x="750" y="490" width="5" height="5" fill="#2e2620" opacity="0.85"/>
<rect x="738" y="456" width="3" height="2" fill="#eee6d8" opacity="0.85"/>
<rect x="757" y="490" width="5" height="4" fill="#2e2620" opacity="0.85"/>
<rect x="760" y="434" width="5" height="3" fill="#463626" opacity="0.85"/>
<rect x="773" y="444" width="5" height="2" fill="#d8c8b0" opacity="0.85"/>
<rect x="755" y="522" width="4" height="4" fill="#2e2620" opacity="0.85"/>
<rect x="758" y="496" width="2" height="2" fill="#d8c8b0" opacity="0.85"/>
<rect x="790" y="483" width="2" height="2" fill="#1e1a16" opacity="0.85"/>
<rect x="771" y="463" width="5" height="4" fill="#463626" opacity="0.85"/>
<rect x="769" y="534" width="2" height="5" fill="#2e2620" opacity="0.85"/>
<rect x="737" y="500" width="2" height="3" fill="#d8c8b0" opacity="0.85"/>
<rect x="774" y="441" width="5" height="5" fill="#eee6d8" opacity="0.85"/>
<rect x="788" y="486" width="5" height="5" fill="#eee6d8" opacity="0.85"/>
<rect x="754" y="534" width="6" height="4" fill="#d8c8b0" opacity="0.85"/>
<rect x="769" y="546" width="5" height="3" fill="#1e1a16" opacity="0.85"/>
<rect x="719" y="447" width="3" height="2" fill="#eee6d8" opacity="0.85"/>
<rect x="749" y="497" width="4" height="2" fill="#2e2620" opacity="0.85"/>
<rect x="718" y="491" width="6" height="4" fill="#463626" opacity="0.85"/>
<rect x="791" y="510" width="6" height="2" fill="#463626" opacity="0.85"/>
<rect x="746" y="532" width="6" height="5" fill="#1e1a16" opacity="0.85"/>
<rect x="741" y="473" width="5" height="2" fill="#d8c8b0" opacity="0.85"/>
<rect x="722" y="546" width="3" height="2" fill="#d8c8b0" opacity="0.85"/>
<rect x="736" y="431" width="6" height="3" fill="#1e1a16" opacity="0.85"/>
<rect x="753" y="542" width="2" height="2" fill="#463626" opacity="0.85"/>
<rect x="784" y="501" width="4" height="4" fill="#eee6d8" opacity="0.85"/>
<rect x="759" y="483" width="5" height="5" fill="#1e1a16" opacity="0.85"/>
<rect x="748" y="463" width="2" height="4" fill="#eee6d8" opacity="0.85"/>
<rect x="772" y="484" width="3" height="2" fill="#1e1a16" opacity="0.85"/>
<rect x="723" y="542" width="3" height="2" fill="#2e2620" opacity="0.85"/>
<rect x="773" y="462" width="2" height="4" fill="#1e1a16" opacity="0.85"/>
<rect x="752" y="537" width="3" height="4" fill="#2e2620" opacity="0.85"/>
<rect x="762" y="500" width="3" height="5" fill="#eee6d8" opacity="0.85"/>
<rect x="772" y="453" width="5" height="4" fill="#463626" opacity="0.85"/>
<rect x="771" y="547" width="5" height="4" fill="#2e2620" opacity="0.85"/>
<rect x="722" y="499" width="5" height="4" fill="#2e2620" opacity="0.85"/>
<rect x="725" y="453" width="4" height="3" fill="#eee6d8" opacity="0.85"/>
<rect x="748" y="546" width="2" height="5" fill="#463626" opacity="0.85"/>
<rect x="787" y="467" width="2" height="2" fill="#1e1a16" opacity="0.85"/>
<rect x="787" y="521" width="5" height="3" fill="#eee6d8" opacity="0.85"/>
<rect x="744" y="503" width="5" height="5" fill="#1e1a16" opacity="0.85"/>
<rect x="741" y="541" width="3" height="3" fill="#1e1a16" opacity="0.85"/>
<rect x="758" y="482" width="3" height="5" fill="#1e1a16" opacity="0.85"/>
<rect x="764" y="468" width="6" height="3" fill="#463626" opacity="0.85"/>
<rect x="707" y="523" width="2" height="3" fill="#1e1a16" opacity="0.85"/>
<rect x="744" y="532" width="2" height="4" fill="#eee6d8" opacity="0.85"/>
<rect x="724" y="487" width="4" height="4" fill="#463626" opacity="0.85"/>
<rect x="754" y="528" width="4" height="5" fill="#1e1a16" opacity="0.85"/>
<rect x="765" y="525" width="5" height="3" fill="#463626" opacity="0.85"/>
<rect x="753" y="489" width="5" height="3" fill="#1e1a16" opacity="0.85"/>
<rect x="760" y="520" width="3" height="3" fill="#eee6d8" opacity="0.85"/>
<rect x="748" y="514" width="2" height="4" fill="#463626" opacity="0.85"/>
<rect x="766" y="490" width="2" height="2" fill="#d8c8b0" opacity="0.85"/>
<rect x="727" y="459" width="6" height="5" fill="#1e1a16" opacity="0.85"/>
<rect x="756" y="518" width="5" height="4" fill="#1e1a16" opacity="0.85"/>
<rect x="760" y="487" width="3" height="4" fill="#463626" opacity="0.85"/>
<rect x="746" y="491" width="6" height="3" fill="#d8c8b0" opacity="0.85"/>
<rect x="768" y="533" width="6" height="3" fill="#2e2620" opacity="0.85"/>
<rect x="781" y="442" width="5" height="5" fill="#1e1a16" opacity="0.85"/>
<rect x="733" y="508" width="2" height="3" fill="#d8c8b0" opacity="0.85"/>
<rect x="765" y="521" width="4" height="3" fill="#eee6d8" opacity="0.85"/>
<rect x="728" y="442" width="3" height="2" fill="#d8c8b0" opacity="0.85"/>
<rect x="741" y="485" width="3" height="3" fill="#1e1a16" opacity="0.85"/>
<rect x="769" y="547" width="4" height="5" fill="#d8c8b0" opacity="0.85"/>
<rect x="723" y="464" width="4" height="2" fill="#1e1a16" opacity="0.85"/>
<rect x="735" y="481" width="2" height="5" fill="#1e1a16" opacity="0.85"/>
<rect x="735" y="502" width="2" height="2" fill="#463626" opacity="0.85"/>
<rect x="794" y="522" width="2" height="4" fill="#1e1a16" opacity="0.85"/>
<rect x="729" y="536" width="4" height="3" fill="#eee6d8" opacity="0.85"/>
<rect x="779" y="529" width="4" height="5" fill="#1e1a16" opacity="0.85"/>
<rect x="718" y="538" width="5" height="4" fill="#463626" opacity="0.85"/>
<rect x="713" y="432" width="3" height="5" fill="#1e1a16" opacity="0.85"/>
<rect x="786" y="458" width="2" height="4" fill="#1e1a16" opacity="0.85"/>
<rect x="713" y="530" width="4" height="2" fill="#1e1a16" opacity="0.85"/>
<rect x="746" y="467" width="5" height="4" fill="#463626" opacity="0.85"/>
<rect x="761" y="430" width="3" height="2" fill="#1e1a16" opacity="0.85"/>
<rect x="721" y="540" width="4" height="3" fill="#1e1a16" opacity="0.85"/>
<rect x="731" y="487" width="4" height="4" fill="#eee6d8" opacity="0.85"/>
</g>
</g>
<rect x="500" y="270" width="660" height="820" filter="url(#nzH)" opacity="0.35"/>
</g>
<path d="M980,463 C988.0,461.8 987.8,464.2 991,466 C994.2,467.8 996.7,470.0 999,474 C1001.3,478.0 1004.2,481.8 1005,490 C1005.8,498.2 1005.7,513.3 1004,523 C1002.3,532.7 996.7,541.3 995,548 C993.3,554.7 992.7,557.7 994,563 C995.3,568.3 997.2,579.2 1003,580 C1008.8,580.8 1019.0,571.8 1029,568 C1039.0,564.2 1054.2,558.3 1063,557 C1071.8,555.7 1077.8,557.8 1082,560 C1086.2,562.2 1089.2,564.5 1088,570 C1086.8,575.5 1081.0,585.3 1075,593 C1069.0,600.7 1059.0,609.5 1052,616 C1045.0,622.5 1035.3,625.5 1033,632 C1030.7,638.5 1035.7,645.3 1038,655 C1040.3,664.7 1044.0,681.5 1047,690 C1050.0,698.5 1051.8,700.5 1056,706 C1060.2,711.5 1070.2,715.7 1072,723 C1073.8,730.3 1070.2,738.8 1067,750 C1063.8,761.2 1056.3,777.8 1053,790 C1049.7,802.2 1049.7,817.2 1047,823 C1044.3,828.8 1039.3,816.7 1037,825 C1034.7,833.3 1035.3,856.7 1033,873 C1030.7,889.3 1026.8,909.0 1023,923 C1019.2,937.0 1015.0,948.0 1010,957 C1005.0,966.0 1000.2,972.3 993,977 C985.8,981.7 977.0,981.7 967,985 C957.0,988.3 944.2,993.3 933,997 C921.8,1000.7 911.0,1003.7 900,1007 C889.0,1010.3 878.2,1015.2 867,1017 C855.8,1018.8 847.0,1018.8 833,1018 C819.0,1017.2 798.5,1014.5 783,1012 C767.5,1009.5 751.7,1006.7 740,1003 C728.3,999.3 720.2,996.0 713,990 C705.8,984.0 700.0,976.5 697,967 C694.0,957.5 694.5,943.0 695,933 C695.5,923.0 697.0,921.3 700,907 C703.0,892.7 708.5,863.7 713,847 C717.5,830.3 723.5,819.8 727,807 C730.5,794.2 733.7,780.7 734,770 C734.3,759.3 732.2,748.7 729,743 C725.8,737.3 717.3,738.3 715,736 C712.7,733.7 712.7,732.5 715,729 C717.3,725.5 730.5,720.3 729,715 C727.5,709.7 713.7,703.2 706,697 C698.3,690.8 687.0,683.8 683,678 C679.0,672.2 681.7,666.5 682,662 C682.3,657.5 681.0,654.5 685,651 C689.0,647.5 699.5,644.2 706,641 C712.5,637.8 722.8,637.7 724,632 C725.2,626.3 714.8,613.5 713,607 C711.2,600.5 709.2,600.0 713,593 C716.8,586.0 728.0,573.5 736,565 C744.0,556.5 754.2,547.3 761,542 C767.8,536.7 769.3,537.2 777,533 C784.7,528.8 794.8,522.0 807,517 C819.2,512.0 837.3,507.5 850,503 C862.7,498.5 869.7,494.2 883,490 C896.3,485.8 920.0,480.8 930,478 C940.0,475.2 934.7,475.5 943,473 C951.3,470.5 972.0,464.2 980,463Z" fill="url(#bg)"/>
<g clip-path="url(#bc)">
<g filter="url(#b6)" stroke="#00d8ff" stroke-linecap="round" opacity="0.75">
<path d="M895,680 L1000,610" stroke-width="10"/>
<path d="M845,700 L790,690" stroke-width="8"/>
<path d="M860,680 L835,640" stroke-width="8"/>
<path d="M905,720 L960,740" stroke-width="10"/>
</g>
<path d="M877,664.5 C883.6,665.0 894.7,668.6 900,674 C905.3,679.4 906.3,689.0 909,697 C911.7,705.0 917.2,715.2 916,722 C914.8,728.8 908.2,733.8 902,738 C895.8,742.2 886.7,743.8 879,747 C871.3,750.2 862.9,756.2 856,757 C849.1,757.8 841.3,755.9 837.5,752 C833.7,748.1 831.9,740.5 833,733.6 C834.1,726.7 841.3,718.2 844,710.5 C846.7,702.8 846.2,694.1 849,687.5 C851.8,680.9 855.8,674.8 860.5,671 C865.2,667.2 870.4,664.0 877,664.5Z" fill="#00d0ff" stroke="#00c8ff" stroke-width="140" stroke-linejoin="round" filter="url(#b18)" opacity="0.38" transform="translate(4,14)"/>
<path d="M877,664.5 C883.6,665.0 894.7,668.6 900,674 C905.3,679.4 906.3,689.0 909,697 C911.7,705.0 917.2,715.2 916,722 C914.8,728.8 908.2,733.8 902,738 C895.8,742.2 886.7,743.8 879,747 C871.3,750.2 862.9,756.2 856,757 C849.1,757.8 841.3,755.9 837.5,752 C833.7,748.1 831.9,740.5 833,733.6 C834.1,726.7 841.3,718.2 844,710.5 C846.7,702.8 846.2,694.1 849,687.5 C851.8,680.9 855.8,674.8 860.5,671 C865.2,667.2 870.4,664.0 877,664.5Z" fill="#00f0ff" stroke="#00f0ff" stroke-width="78" stroke-linejoin="round" filter="url(#b10)" opacity="0.85" transform="translate(3,7)"/>
<path d="M877,664.5 C883.6,665.0 894.7,668.6 900,674 C905.3,679.4 906.3,689.0 909,697 C911.7,705.0 917.2,715.2 916,722 C914.8,728.8 908.2,733.8 902,738 C895.8,742.2 886.7,743.8 879,747 C871.3,750.2 862.9,756.2 856,757 C849.1,757.8 841.3,755.9 837.5,752 C833.7,748.1 831.9,740.5 833,733.6 C834.1,726.7 841.3,718.2 844,710.5 C846.7,702.8 846.2,694.1 849,687.5 C851.8,680.9 855.8,674.8 860.5,671 C865.2,667.2 870.4,664.0 877,664.5Z" fill="#00ffc0" stroke="#00ffc8" stroke-width="52" stroke-linejoin="round" filter="url(#b6)" transform="translate(2,4)"/>
<path d="M877,664.5 C883.6,665.0 894.7,668.6 900,674 C905.3,679.4 906.3,689.0 909,697 C911.7,705.0 917.2,715.2 916,722 C914.8,728.8 908.2,733.8 902,738 C895.8,742.2 886.7,743.8 879,747 C871.3,750.2 862.9,756.2 856,757 C849.1,757.8 841.3,755.9 837.5,752 C833.7,748.1 831.9,740.5 833,733.6 C834.1,726.7 841.3,718.2 844,710.5 C846.7,702.8 846.2,694.1 849,687.5 C851.8,680.9 855.8,674.8 860.5,671 C865.2,667.2 870.4,664.0 877,664.5Z" fill="#00ff30" stroke="#10ff20" stroke-width="30" stroke-linejoin="round" filter="url(#b3)" transform="translate(1,2)"/>
<path d="M877,664.5 C883.6,665.0 894.7,668.6 900,674 C905.3,679.4 906.3,689.0 909,697 C911.7,705.0 917.2,715.2 916,722 C914.8,728.8 908.2,733.8 902,738 C895.8,742.2 886.7,743.8 879,747 C871.3,750.2 862.9,756.2 856,757 C849.1,757.8 841.3,755.9 837.5,752 C833.7,748.1 831.9,740.5 833,733.6 C834.1,726.7 841.3,718.2 844,710.5 C846.7,702.8 846.2,694.1 849,687.5 C851.8,680.9 855.8,674.8 860.5,671 C865.2,667.2 870.4,664.0 877,664.5Z" fill="#ffff00" stroke="#f4ff00" stroke-width="9" stroke-linejoin="round" filter="url(#b2)"/>
<path d="M877,664.5 C883.6,665.0 894.7,668.6 900,674 C905.3,679.4 906.3,689.0 909,697 C911.7,705.0 917.2,715.2 916,722 C914.8,728.8 908.2,733.8 902,738 C895.8,742.2 886.7,743.8 879,747 C871.3,750.2 862.9,756.2 856,757 C849.1,757.8 841.3,755.9 837.5,752 C833.7,748.1 831.9,740.5 833,733.6 C834.1,726.7 841.3,718.2 844,710.5 C846.7,702.8 846.2,694.1 849,687.5 C851.8,680.9 855.8,674.8 860.5,671 C865.2,667.2 870.4,664.0 877,664.5Z" fill="#ff0000" stroke="#ff0000" stroke-width="2" stroke-linejoin="round" filter="url(#b1)"/>
<polygon points="879,674 893,687 897,699 888,715 867,731 851,745 842,740 840,729 849,713 856,697 867,683" fill="#800000" stroke="#800000" stroke-width="4" stroke-linejoin="round"/>
<path d="M879,675 L892,688 L895,699 L886,713 L866,729 L850,743 L845,741" fill="none" stroke="#3a2a2a" stroke-width="2"/>
<g fill="#fff">
<rect x="1006" y="1012" width="1" height="1"/>
<rect x="700" y="475" width="1" height="1"/>
<rect x="887" y="1003" width="1" height="1"/>
<rect x="891" y="600" width="1" height="1"/>
<rect x="864" y="827" width="1" height="1"/>
<rect x="945" y="826" width="1" height="1"/>
<rect x="903" y="954" width="1" height="1"/>
<rect x="1073" y="634" width="1" height="1"/>
<rect x="771" y="591" width="1" height="1"/>
<rect x="764" y="950" width="1" height="1"/>
<rect x="977" y="542" width="1" height="1"/>
<rect x="1081" y="1005" width="1" height="1"/>
<rect x="1020" y="473" width="1" height="1"/>
<rect x="935" y="949" width="1" height="1"/>
<rect x="857" y="495" width="1" height="1"/>
<rect x="951" y="674" width="1" height="1"/>
<rect x="887" y="999" width="1" height="1"/>
<rect x="925" y="846" width="1" height="1"/>
<rect x="703" y="567" width="1" height="1"/>
<rect x="793" y="467" width="1" height="1"/>
<rect x="831" y="646" width="1" height="1"/>
<rect x="1079" y="643" width="1" height="1"/>
<rect x="699" y="950" width="1" height="1"/>
<rect x="772" y="566" width="1" height="1"/>
<rect x="819" y="511" width="1" height="1"/>
<rect x="797" y="826" width="1" height="1"/>
<rect x="784" y="892" width="1" height="1"/>
<rect x="721" y="914" width="1" height="1"/>
<rect x="743" y="788" width="1" height="1"/>
<rect x="843" y="630" width="1" height="1"/>
<rect x="937" y="511" width="1" height="1"/>
<rect x="1068" y="934" width="1" height="1"/>
<rect x="747" y="956" width="1" height="1"/>
<rect x="999" y="793" width="1" height="1"/>
<rect x="991" y="861" width="1" height="1"/>
<rect x="883" y="621" width="1" height="1"/>
<rect x="932" y="545" width="1" height="1"/>
<rect x="1015" y="858" width="1" height="1"/>
<rect x="890" y="701" width="1" height="1"/>
<rect x="965" y="743" width="1" height="1"/>
<rect x="1049" y="879" width="1" height="1"/>
<rect x="912" y="912" width="1" height="1"/>
<rect x="691" y="843" width="1" height="1"/>
<rect x="1004" y="856" width="1" height="1"/>
<rect x="1067" y="819" width="1" height="1"/>
<rect x="719" y="488" width="1" height="1"/>
<rect x="940" y="993" width="1" height="1"/>
<rect x="836" y="713" width="1" height="1"/>
<rect x="705" y="475" width="1" height="1"/>
<rect x="898" y="600" width="1" height="1"/>
<rect x="791" y="716" width="1" height="1"/>
<rect x="713" y="978" width="1" height="1"/>
<rect x="1044" y="516" width="1" height="1"/>
<rect x="895" y="875" width="1" height="1"/>
<rect x="875" y="910" width="1" height="1"/>
<rect x="1023" y="594" width="1" height="1"/>
<rect x="988" y="592" width="1" height="1"/>
<rect x="945" y="718" width="1" height="1"/>
<rect x="1023" y="507" width="1" height="1"/>
<rect x="1049" y="623" width="1" height="1"/>
<rect x="704" y="813" width="1" height="1"/>
<rect x="764" y="795" width="1" height="1"/>
<rect x="818" y="823" width="1" height="1"/>
<rect x="962" y="807" width="1" height="1"/>
<rect x="738" y="730" width="1" height="1"/>
<rect x="879" y="1000" width="1" height="1"/>
<rect x="725" y="585" width="1" height="1"/>
<rect x="881" y="855" width="1" height="1"/>
<rect x="799" y="721" width="1" height="1"/>
<rect x="992" y="1011" width="1" height="1"/>
<rect x="905" y="636" width="1" height="1"/>
<rect x="719" y="725" width="1" height="1"/>
<rect x="801" y="507" width="1" height="1"/>
<rect x="888" y="1012" width="1" height="1"/>
<rect x="1083" y="678" width="1" height="1"/>
<rect x="1052" y="977" width="1" height="1"/>
<rect x="715" y="515" width="1" height="1"/>
<rect x="984" y="609" width="1" height="1"/>
<rect x="829" y="797" width="1" height="1"/>
<rect x="938" y="619" width="1" height="1"/>
<rect x="730" y="666" width="1" height="1"/>
<rect x="884" y="947" width="1" height="1"/>
<rect x="843" y="552" width="1" height="1"/>
<rect x="1065" y="840" width="1" height="1"/>
<rect x="847" y="865" width="1" height="1"/>
<rect x="851" y="672" width="1" height="1"/>
<rect x="733" y="647" width="1" height="1"/>
<rect x="815" y="651" width="1" height="1"/>
<rect x="844" y="982" width="1" height="1"/>
<rect x="763" y="471" width="1" height="1"/>
<rect x="981" y="604" width="1" height="1"/>
<rect x="711" y="680" width="1" height="1"/>
<rect x="1033" y="507" width="1" height="1"/>
<rect x="1055" y="881" width="1" height="1"/>
<rect x="1027" y="619" width="1" height="1"/>
<rect x="706" y="829" width="1" height="1"/>
<rect x="939" y="547" width="1" height="1"/>
<rect x="1073" y="705" width="1" height="1"/>
<rect x="811" y="890" width="1" height="1"/>
<rect x="999" y="700" width="1" height="1"/>
<rect x="697" y="884" width="1" height="1"/>
<rect x="845" y="947" width="1" height="1"/>
<rect x="907" y="577" width="1" height="1"/>
<rect x="717" y="978" width="1" height="1"/>
<rect x="849" y="803" width="1" height="1"/>
<rect x="740" y="943" width="1" height="1"/>
<rect x="879" y="967" width="1" height="1"/>
<rect x="905" y="559" width="1" height="1"/>
<rect x="851" y="620" width="1" height="1"/>
<rect x="787" y="871" width="1" height="1"/>
<rect x="946" y="688" width="1" height="1"/>
<rect x="780" y="731" width="1" height="1"/>
<rect x="953" y="531" width="1" height="1"/>
<rect x="942" y="506" width="1" height="1"/>
<rect x="885" y="912" width="1" height="1"/>
<rect x="905" y="714" width="1" height="1"/>
<rect x="818" y="883" width="1" height="1"/>
<rect x="856" y="766" width="1" height="1"/>
<rect x="783" y="561" width="1" height="1"/>
<rect x="907" y="641" width="1" height="1"/>
<rect x="832" y="910" width="1" height="1"/>
<rect x="766" y="476" width="1" height="1"/>
<rect x="1033" y="676" width="1" height="1"/>
<rect x="983" y="581" width="1" height="1"/>
<rect x="793" y="879" width="1" height="1"/>
<rect x="884" y="781" width="1" height="1"/>
<rect x="829" y="843" width="1" height="1"/>
<rect x="897" y="900" width="1" height="1"/>
<rect x="1024" y="516" width="1" height="1"/>
<rect x="1044" y="677" width="1" height="1"/>
<rect x="943" y="703" width="1" height="1"/>
<rect x="810" y="913" width="1" height="1"/>
<rect x="1072" y="535" width="1" height="1"/>
<rect x="855" y="885" width="1" height="1"/>
<rect x="1007" y="998" width="1" height="1"/>
<rect x="881" y="505" width="1" height="1"/>
<rect x="1057" y="975" width="1" height="1"/>
<rect x="896" y="722" width="1" height="1"/>
<rect x="865" y="896" width="1" height="1"/>
<rect x="775" y="549" width="1" height="1"/>
<rect x="1074" y="525" width="1" height="1"/>
<rect x="1015" y="851" width="1" height="1"/>
<rect x="1024" y="957" width="1" height="1"/>
<rect x="719" y="892" width="1" height="1"/>
<rect x="686" y="534" width="1" height="1"/>
<rect x="913" y="486" width="1" height="1"/>
<rect x="971" y="994" width="1" height="1"/>
<rect x="936" y="756" width="1" height="1"/>
<rect x="860" y="885" width="1" height="1"/>
<rect x="725" y="630" width="1" height="1"/>
<rect x="1062" y="570" width="1" height="1"/>
<rect x="789" y="900" width="1" height="1"/>
<rect x="685" y="761" width="1" height="1"/>
<rect x="1084" y="618" width="1" height="1"/>
<rect x="812" y="927" width="1" height="1"/>
<rect x="782" y="754" width="1" height="1"/>
<rect x="904" y="481" width="1" height="1"/>
<rect x="850" y="822" width="1" height="1"/>
<rect x="707" y="572" width="1" height="1"/>
<rect x="1039" y="821" width="1" height="1"/>
<rect x="717" y="590" width="1" height="1"/>
<rect x="855" y="669" width="1" height="1"/>
<rect x="882" y="848" width="1" height="1"/>
<rect x="972" y="664" width="1" height="1"/>
<rect x="844" y="469" width="1" height="1"/>
<rect x="802" y="930" width="1" height="1"/>
<rect x="712" y="738" width="1" height="1"/>
<rect x="765" y="886" width="1" height="1"/>
<rect x="763" y="721" width="1" height="1"/>
<rect x="791" y="954" width="1" height="1"/>
<rect x="729" y="808" width="1" height="1"/>
<rect x="929" y="958" width="1" height="1"/>
<rect x="879" y="966" width="1" height="1"/>
<rect x="708" y="792" width="1" height="1"/>
<rect x="1054" y="495" width="1" height="1"/>
<rect x="694" y="793" width="1" height="1"/>
<rect x="851" y="855" width="1" height="1"/>
<rect x="759" y="712" width="1" height="1"/>
<rect x="970" y="638" width="1" height="1"/>
<rect x="730" y="509" width="1" height="1"/>
<rect x="751" y="570" width="1" height="1"/>
<rect x="946" y="754" width="1" height="1"/>
<rect x="872" y="637" width="1" height="1"/>
<rect x="975" y="927" width="1" height="1"/>
<rect x="1079" y="708" width="1" height="1"/>
<rect x="729" y="508" width="1" height="1"/>
<rect x="717" y="696" width="1" height="1"/>
<rect x="1039" y="774" width="1" height="1"/>
<rect x="989" y="674" width="1" height="1"/>
<rect x="992" y="635" width="1" height="1"/>
<rect x="1007" y="513" width="1" height="1"/>
<rect x="967" y="573" width="1" height="1"/>
<rect x="902" y="710" width="1" height="1"/>
<rect x="814" y="871" width="1" height="1"/>
<rect x="875" y="812" width="1" height="1"/>
<rect x="784" y="809" width="1" height="1"/>
<rect x="847" y="672" width="1" height="1"/>
<rect x="871" y="907" width="1" height="1"/>
<rect x="710" y="572" width="1" height="1"/>
<rect x="710" y="798" width="1" height="1"/>
<rect x="830" y="649" width="1" height="1"/>
<rect x="1067" y="489" width="1" height="1"/>
<rect x="984" y="844" width="1" height="1"/>
<rect x="1055" y="629" width="1" height="1"/>
<rect x="974" y="793" width="1" height="1"/>
<rect x="1007" y="986" width="1" height="1"/>
<rect x="711" y="919" width="1" height="1"/>
<rect x="728" y="859" width="1" height="1"/>
<rect x="871" y="892" width="1" height="1"/>
<rect x="1001" y="967" width="1" height="1"/>
<rect x="1011" y="538" width="1" height="1"/>
<rect x="884" y="470" width="1" height="1"/>
<rect x="1057" y="632" width="1" height="1"/>
<rect x="962" y="548" width="1" height="1"/>
<rect x="779" y="939" width="1" height="1"/>
<rect x="869" y="896" width="1" height="1"/>
<rect x="923" y="747" width="1" height="1"/>
<rect x="842" y="553" width="1" height="1"/>
<rect x="848" y="822" width="1" height="1"/>
<rect x="878" y="765" width="1" height="1"/>
<rect x="749" y="700" width="1" height="1"/>
<rect x="727" y="505" width="1" height="1"/>
<rect x="935" y="580" width="1" height="1"/>
<rect x="853" y="1009" width="1" height="1"/>
<rect x="1074" y="560" width="1" height="1"/>
<rect x="738" y="719" width="1" height="1"/>
<rect x="1042" y="594" width="1" height="1"/>
<rect x="900" y="891" width="1" height="1"/>
<rect x="989" y="894" width="1" height="1"/>
<rect x="803" y="619" width="1" height="1"/>
<rect x="792" y="605" width="1" height="1"/>
<rect x="789" y="707" width="1" height="1"/>
<rect x="759" y="595" width="1" height="1"/>
<rect x="798" y="964" width="1" height="1"/>
<rect x="760" y="501" width="1" height="1"/>
<rect x="786" y="600" width="1" height="1"/>
<rect x="896" y="822" width="1" height="1"/>
<rect x="725" y="720" width="1" height="1"/>
<rect x="700" y="467" width="1" height="1"/>
<rect x="1038" y="592" width="1" height="1"/>
<rect x="864" y="671" width="1" height="1"/>
<rect x="1036" y="593" width="1" height="1"/>
<rect x="705" y="795" width="1" height="1"/>
<rect x="1016" y="572" width="1" height="1"/>
<rect x="715" y="747" width="1" height="1"/>
<rect x="756" y="797" width="1" height="1"/>
<rect x="995" y="831" width="1" height="1"/>
<rect x="688" y="816" width="1" height="1"/>
<rect x="969" y="657" width="1" height="1"/>
<rect x="700" y="652" width="1" height="1"/>
<rect x="703" y="1015" width="1" height="1"/>
<rect x="700" y="868" width="1" height="1"/>
<rect x="1051" y="913" width="1" height="1"/>
<rect x="1013" y="690" width="1" height="1"/>
<rect x="834" y="807" width="1" height="1"/>
<rect x="716" y="482" width="1" height="1"/>
<rect x="883" y="731" width="1" height="1"/>
<rect x="848" y="903" width="1" height="1"/>
<rect x="951" y="550" width="1" height="1"/>
<rect x="899" y="824" width="1" height="1"/>
<rect x="844" y="614" width="1" height="1"/>
<rect x="1080" y="832" width="1" height="1"/>
<rect x="852" y="493" width="1" height="1"/>
<rect x="983" y="951" width="1" height="1"/>
<rect x="851" y="475" width="1" height="1"/>
<rect x="992" y="906" width="1" height="1"/>
<rect x="943" y="680" width="1" height="1"/>
<rect x="847" y="983" width="1" height="1"/>
<rect x="859" y="551" width="1" height="1"/>
<rect x="730" y="515" width="1" height="1"/>
<rect x="916" y="666" width="1" height="1"/>
<rect x="994" y="536" width="1" height="1"/>
<rect x="706" y="543" width="1" height="1"/>
<rect x="1008" y="683" width="1" height="1"/>
<rect x="914" y="975" width="1" height="1"/>
<rect x="980" y="559" width="1" height="1"/>
<rect x="824" y="554" width="1" height="1"/>
<rect x="754" y="502" width="1" height="1"/>
<rect x="838" y="879" width="1" height="1"/>
<rect x="1002" y="908" width="1" height="1"/>
<rect x="806" y="926" width="1" height="1"/>
<rect x="702" y="967" width="1" height="1"/>
<rect x="811" y="799" width="1" height="1"/>
<rect x="940" y="512" width="1" height="1"/>
<rect x="970" y="844" width="1" height="1"/>
<rect x="1041" y="817" width="1" height="1"/>
<rect x="1028" y="807" width="1" height="1"/>
<rect x="931" y="573" width="1" height="1"/>
<rect x="874" y="776" width="1" height="1"/>
<rect x="702" y="981" width="1" height="1"/>
<rect x="748" y="663" width="1" height="1"/>
<rect x="745" y="999" width="1" height="1"/>
<rect x="1011" y="571" width="1" height="1"/>
<rect x="1039" y="928" width="1" height="1"/>
<rect x="954" y="832" width="1" height="1"/>
<rect x="815" y="679" width="1" height="1"/>
<rect x="867" y="932" width="1" height="1"/>
<rect x="996" y="822" width="1" height="1"/>
<rect x="808" y="602" width="1" height="1"/>
<rect x="841" y="667" width="1" height="1"/>
<rect x="886" y="563" width="1" height="1"/>
<rect x="686" y="1007" width="1" height="1"/>
<rect x="871" y="711" width="1" height="1"/>
<rect x="932" y="915" width="1" height="1"/>
<rect x="1020" y="911" width="1" height="1"/>
<rect x="845" y="502" width="1" height="1"/>
<rect x="828" y="666" width="1" height="1"/>
<rect x="1006" y="742" width="1" height="1"/>
<rect x="948" y="487" width="1" height="1"/>
<rect x="737" y="972" width="1" height="1"/>
<rect x="810" y="861" width="1" height="1"/>
<rect x="717" y="879" width="1" height="1"/>
<rect x="1043" y="824" width="1" height="1"/>
<rect x="999" y="479" width="1" height="1"/>
<rect x="712" y="803" width="1" height="1"/>
<rect x="962" y="525" width="1" height="1"/>
<rect x="738" y="952" width="1" height="1"/>
<rect x="800" y="911" width="1" height="1"/>
<rect x="1003" y="842" width="1" height="1"/>
<rect x="973" y="587" width="1" height="1"/>
<rect x="1018" y="801" width="1" height="1"/>
<rect x="786" y="643" width="1" height="1"/>
<rect x="930" y="963" width="1" height="1"/>
<rect x="868" y="605" width="1" height="1"/>
<rect x="1071" y="729" width="1" height="1"/>
<rect x="922" y="804" width="1" height="1"/>
<rect x="780" y="670" width="1" height="1"/>
<rect x="765" y="687" width="1" height="1"/>
<rect x="940" y="618" width="1" height="1"/>
<rect x="816" y="672" width="1" height="1"/>
<rect x="1002" y="610" width="1" height="1"/>
<rect x="992" y="492" width="1" height="1"/>
<rect x="1028" y="996" width="1" height="1"/>
<rect x="866" y="752" width="1" height="1"/>
<rect x="960" y="958" width="1" height="1"/>
<rect x="786" y="760" width="1" height="1"/>
<rect x="1028" y="871" width="1" height="1"/>
<rect x="834" y="672" width="1" height="1"/>
<rect x="833" y="545" width="1" height="1"/>
<rect x="817" y="510" width="1" height="1"/>
<rect x="777" y="803" width="1" height="1"/>
<rect x="1068" y="628" width="1" height="1"/>
<rect x="891" y="636" width="1" height="1"/>
<rect x="1071" y="944" width="1" height="1"/>
<rect x="1056" y="958" width="1" height="1"/>
<rect x="978" y="876" width="1" height="1"/>
<rect x="774" y="625" width="1" height="1"/>
<rect x="935" y="695" width="1" height="1"/>
<rect x="831" y="491" width="1" height="1"/>
<rect x="880" y="802" width="1" height="1"/>
<rect x="703" y="495" width="1" height="1"/>
<rect x="912" y="632" width="1" height="1"/>
<rect x="894" y="759" width="1" height="1"/>
<rect x="850" y="631" width="1" height="1"/>
<rect x="738" y="666" width="1" height="1"/>
<rect x="1016" y="552" width="1" height="1"/>
<rect x="691" y="906" width="1" height="1"/>
<rect x="968" y="713" width="1" height="1"/>
<rect x="710" y="545" width="1" height="1"/>
<rect x="951" y="613" width="1" height="1"/>
<rect x="1010" y="997" width="1" height="1"/>
<rect x="707" y="916" width="1" height="1"/>
<rect x="1042" y="792" width="1" height="1"/>
<rect x="916" y="796" width="1" height="1"/>
<rect x="892" y="736" width="1" height="1"/>
<rect x="751" y="465" width="1" height="1"/>
<rect x="710" y="479" width="1" height="1"/>
<rect x="759" y="553" width="1" height="1"/>
<rect x="1050" y="523" width="1" height="1"/>
<rect x="930" y="826" width="1" height="1"/>
<rect x="764" y="692" width="1" height="1"/>
<rect x="892" y="818" width="1" height="1"/>
<rect x="944" y="693" width="1" height="1"/>
<rect x="930" y="745" width="1" height="1"/>
<rect x="711" y="809" width="1" height="1"/>
<rect x="1083" y="863" width="1" height="1"/>
<rect x="876" y="761" width="1" height="1"/>
<rect x="835" y="705" width="1" height="1"/>
<rect x="1050" y="509" width="1" height="1"/>
<rect x="947" y="561" width="1" height="1"/>
<rect x="1084" y="609" width="1" height="1"/>
<rect x="943" y="533" width="1" height="1"/>
<rect x="1042" y="974" width="1" height="1"/>
<rect x="1062" y="610" width="1" height="1"/>
<rect x="706" y="815" width="1" height="1"/>
<rect x="957" y="842" width="1" height="1"/>
<rect x="1052" y="1000" width="1" height="1"/>
<rect x="803" y="976" width="1" height="1"/>
<rect x="1043" y="512" width="1" height="1"/>
<rect x="888" y="558" width="1" height="1"/>
<rect x="1047" y="928" width="1" height="1"/>
<rect x="766" y="553" width="1" height="1"/>
<rect x="1051" y="571" width="1" height="1"/>
<rect x="840" y="796" width="1" height="1"/>
<rect x="837" y="934" width="1" height="1"/>
<rect x="1054" y="1005" width="1" height="1"/>
<rect x="1022" y="760" width="1" height="1"/>
<rect x="874" y="757" width="1" height="1"/>
<rect x="688" y="480" width="1" height="1"/>
<rect x="1067" y="594" width="1" height="1"/>
<rect x="1039" y="899" width="1" height="1"/>
<rect x="842" y="787" width="1" height="1"/>
<rect x="911" y="559" width="1" height="1"/>
<rect x="698" y="527" width="1" height="1"/>
<rect x="934" y="554" width="1" height="1"/>
<rect x="1076" y="850" width="1" height="1"/>
<rect x="697" y="541" width="1" height="1"/>
<rect x="942" y="488" width="1" height="1"/>
<rect x="712" y="491" width="1" height="1"/>
<rect x="1028" y="884" width="1" height="1"/>
<rect x="765" y="990" width="1" height="1"/>
<rect x="899" y="830" width="1" height="1"/>
<rect x="1037" y="881" width="1" height="1"/>
<rect x="969" y="676" width="1" height="1"/>
<rect x="784" y="577" width="1" height="1"/>
<rect x="699" y="987" width="1" height="1"/>
<rect x="1049" y="880" width="1" height="1"/>
<rect x="720" y="878" width="1" height="1"/>
<rect x="938" y="727" width="1" height="1"/>
<rect x="738" y="901" width="1" height="1"/>
</g>
</g>
<polygon points="1037,824 1048,823 1044,842 1036,842" fill="#fff"/><polygon points="1028,868 1036,867 1035,872 1027,873" fill="#fff"/>
<text x="1068" y="672" font-family="Liberation Sans, sans-serif" font-size="15.900" fill="#4060c8" text-decoration="underline">MP-04 Vale (484.9 m)</text>
<text x="1068" y="692" font-family="Liberation Sans, sans-serif" font-size="15.900" fill="#ffff38">P :3.13 mm/s (Scaled Distance)</text>
<text x="1068" y="712" font-family="Liberation Sans, sans-serif" font-size="15.900" fill="#ffff38">P :6.68 mm/s (Time Domain)</text>
<rect x="1057.500" y="649.500" width="16" height="17" fill="#c8c8c8" stroke="#e81010" stroke-width="3"/><path d="M1065.500,651 V666 M1059,658 H1073" stroke="#e86060" stroke-width="1"/>
</svg><!--MAP-END-->
<div style="left:59px;top:59px;width:75px;height:75px;background:#c0c0c0;border:1px solid #8c8c8c"></div>
<div class="t" style="left:59px;top:36px;width:75px;text-align:center;font-size:18px">N</div>
<div class="t" style="left:59px;top:136px;width:75px;text-align:center;font-size:18px">S</div>
<div class="t" style="left:36px;top:86px;font-size:18px">W</div>
<div class="t" style="left:140px;top:86px;font-size:18px">E</div>
<div class="t" style="left:26px;top:759px;font-size:24px;color:#7f7f7f">Polígono 10.1.28</div>
<div style="left:1779px;top:793px;width:109px;height:2px;background:#000"></div>

</div>

<!-- STATUS BAR -->
<div id="status">
  <div class="t" style="left:2px;top:11px">ISO UNITS</div>
  <div class="sep" style="left:846px"></div>
  <div class="sep" style="left:1025px"></div>
  <div class="sep" style="left:1307px"></div>
  <div class="sep" style="left:1457px"></div>
  <div class="sep" style="left:1619px"></div>
  <div class="sep" style="left:1769px"></div>
  <div class="t" style="left:1623px;top:11px">Scenario #0</div>
  <div class="t" style="left:1774px;top:11px">ISO UNITS</div>
</div>

<!--PCWIN-START--><style>
#pcw{left:1303px;top:256px;width:424px;height:741px;border-radius:9px;background:#f0f0f0;border:1px solid #a8a8a8;box-shadow:0 18px 40px 4px rgba(0,0,0,0.28),0 0 3px rgba(0,0,0,0.25);overflow:hidden}
#pcw .yl{left:0;top:43px;width:422px;height:660px;background:#ffc830}
.cb{width:20px;height:20px;background:#fff;border:2px solid #7a7a7a;border-right-color:#f2f2f2;border-bottom-color:#f2f2f2;box-shadow:inset 1px 1px 0 #cfcfcf}
.sunk{border:1px solid #6e6e6e;border-right-color:#fff;border-bottom-color:#fff;box-shadow:inset 1px 1px 0 #bdbdbd, 1px 1px 0 #fff, -1px -1px 0 #d9b24a}
.sb{background:#f0f0f0;border:1px solid #fff;border-right-color:#7c7c7c;border-bottom-color:#7c7c7c;box-shadow:inset -1px -1px 0 #c2c2c2}
.dither{background-color:#e6e6e6;background-image:linear-gradient(45deg,#d2d2d2 25%,transparent 25%,transparent 75%,#d2d2d2 75%),linear-gradient(45deg,#d2d2d2 25%,transparent 25%,transparent 75%,#d2d2d2 75%);background-size:2px 2px;background-position:0 0,1px 1px}
</style>
<div id="pcw" class="abs">
  <!-- title -->
  <svg style="left:11px;top:13px" width="26" height="16" viewBox="0 0 26 16" fill="none" stroke="#8a8a8a" stroke-width="1.6"><path d="M6 14.500 a4.500 4.500 0 0 1 -0.500 -8.900 a6 6 0 0 1 11.300 -1.200 a5.200 5.200 0 0 1 3.200 10.100 Z" stroke-linejoin="round"/></svg>
  <div class="t" style="left:43px;top:12px;font-size:18px;color:#9a9a9a;letter-spacing:-0.1px">Point clouds display</div>
  <svg style="left:238px;top:12px" width="162" height="18" viewBox="0 0 162 18" fill="none" stroke="#7a7a7a" stroke-width="1.2"><path d="M2 9 H17"/><rect x="71.500" y="2.500" width="14" height="13.500" rx="2"/><path d="M142.500 2 L156.500 16 M156.500 2 L142.500 16"/></svg>
  <div class="yl"></div>
  <!-- grid -->
  <div style="left:9px;top:58px;width:404px;height:203px;border:2px solid #b08a20;border-right-color:#ffe9a0;border-bottom-color:#ffe9a0"></div>
  <div id="grid" style="left:11px;top:60px;width:400px;height:199px;background:#fff;overflow:hidden">
    <div style="left:0;top:0;width:400px;height:26px;background:#f0f0f0"></div>
    <div style="left:0;top:26px;width:373px;height:28px;background:#0a6fd0"></div>
    <div style="left:0;top:54px;width:373px;height:28px;background:#ffffe6"></div>
    <div style="left:0;top:110px;width:373px;height:28px;background:#ffffe6"></div>
    <div style="left:0;top:166px;width:373px;height:28px;background:#ffffe6"></div>
    <div style="left:0;top:25px;width:373px;height:2px;background:#6a6a6a"></div>
    <div style="left:0;top:54px;width:373px;height:1px;background:#000"></div>
    <div style="left:0;top:82px;width:373px;height:1px;background:#000"></div>
    <div style="left:0;top:110px;width:373px;height:1px;background:#000"></div>
    <div style="left:0;top:138px;width:373px;height:1px;background:#000"></div>
    <div style="left:0;top:166px;width:373px;height:1px;background:#000"></div>
    <div style="left:0;top:194px;width:373px;height:1px;background:#000"></div>
    <div style="left:45px;top:2px;width:1px;height:24px;background:#808080"></div>
    <div style="left:83px;top:2px;width:1px;height:24px;background:#808080"></div>
    <div style="left:45px;top:26px;width:1px;height:175px;background:#000"></div>
    <div style="left:83px;top:26px;width:1px;height:175px;background:#000"></div>
    <div style="left:373px;top:0px;width:1px;height:26px;background:#9a9a9a"></div>
    <div class="cb" style="left:12px;top:4px"></div>
    <svg style="left:16px;top:8px" width="13" height="13" viewBox="0 0 13 13"><path d="M1.500 6 L5 10.500 L11.500 1.500" fill="none" stroke="#000" stroke-width="2.6"/></svg>
    <div class="cb" style="left:13px;top:31px"></div>
    <svg style="left:17px;top:35px" width="13" height="13" viewBox="0 0 13 13"><path d="M1.500 6 L5 10.500 L11.500 1.500" fill="none" stroke="#000" stroke-width="2.6"/></svg>
    <div class="t" style="left:84px;top:6px;width:268px;text-align:center">Name</div>
    <div class="t" style="left:86px;top:34px;color:#fff">Terrain_Before_large_2m</div>
    <!-- search icon -->
    <svg style="left:345px;top:2px" width="28" height="26" viewBox="0 0 28 26"><circle cx="9.500" cy="8.500" r="6.500" fill="#eef0f4" stroke="#707070" stroke-width="1.300"/><path d="M14 13 L24 23" stroke="#1a1ac8" stroke-width="3.200" stroke-linecap="round"/><path d="M14.500 12.500 L24 22" stroke="#9ab0ff" stroke-width="1" stroke-linecap="round"/></svg>
    <!-- stack icon -->
    <svg style="left:377px;top:4px" width="16" height="16" viewBox="0 0 16 16"><rect x="0.500" y="0.500" width="9" height="3" fill="#8080ff" stroke="#000"/><rect x="5.500" y="4.500" width="9" height="10" fill="#c8c8ff" stroke="#000" stroke-width="1.400"/><path d="M7.500 7.500 h5 M7.500 9.500 h5 M7.500 11.500 h5" stroke="#2020c0"/></svg>
    <!-- scrollbar -->
    <div class="dither" style="left:374px;top:26px;width:26px;height:173px"></div>
    <div class="sb" style="left:374px;top:27px;width:25px;height:26px"></div>
    <div class="sb" style="left:374px;top:173px;width:25px;height:26px"></div>
    <svg style="left:381px;top:37px" width="10" height="6"><path d="M0 6 H10 L5 0 Z" fill="#9a9a9a"/></svg>
    <svg style="left:381px;top:183px" width="10" height="6"><path d="M0 0 H10 L5 6 Z" fill="#8a8a8a"/></svg>
  </div>
  <!-- display fieldset -->
  <div style="left:10px;top:275px;width:287px;height:121px;border:1px solid #1a1a1a"></div>
  <div class="t" style="left:16px;top:267px;padding:0 3px;background:#ffc830">Display</div>
  <div class="cb" style="left:15px;top:289px"></div>
  <div class="t" style="left:40px;top:291px;letter-spacing:-0.25px">Simplified display</div>
  <div class="cb" style="left:15px;top:319px"></div>
  <div class="t" style="left:40px;top:321px;letter-spacing:-0.25px">Bounding box</div>
  <div class="t" style="left:12px;top:364px;letter-spacing:-0.25px">Point size</div>
  <div class="sunk" style="left:149px;top:358px;width:48px;height:30px;background:#f0f0f0;border-width:2px"></div>
  <div class="t" style="left:149px;top:365px;width:41px;text-align:right">1</div>
  <div class="btn" style="left:206px;top:355px;width:36px;height:36px;background:#f8f8f8"></div>
  <div class="btn" style="left:248px;top:355px;width:37px;height:36px;background:#f8f8f8"></div>
  <div class="t" style="left:206px;top:365px;width:36px;text-align:center;font-weight:bold;font-size:15px">-</div>
  <div class="t" style="left:248px;top:365px;width:37px;text-align:center;font-weight:bold;font-size:15px">+</div>
  <!-- point clouds mgmt button -->
  <div class="btn" style="left:305px;top:274px;width:108px;height:122px;background:#f8f8f8;border-color:#c9c9c9"></div>
  <svg style="left:321px;top:289px" width="76" height="46" viewBox="0 0 76 46" fill="none" stroke-width="4.200" stroke-linejoin="round" stroke-linecap="round"><path d="M14 28 a9 9 0 0 1 -2 -17.500 a11 11 0 0 1 19 -5" stroke="#a6a6a6"/><path d="M29 41 a10 10 0 0 1 -1.500 -20 a13.500 13.500 0 0 1 25.500 -3 a11.500 11.500 0 0 1 7 23 Z" stroke="#4a8cc8" fill="#f8f8f8"/></svg>
  <div class="t cm" style="left:305px;top:351px;width:109px;text-align:center;font-size:14.5px;letter-spacing:0.6px">Point clouds</div>
  <div class="t cm" style="left:305px;top:375px;width:109px;text-align:center;font-size:14.5px;letter-spacing:0.4px">management</div>
  <!-- combo -->
  <div class="sunk" style="left:13px;top:409px;width:317px;height:28px;background:#fff;border-width:2px"></div>
  <div class="t" style="left:17px;top:415px;letter-spacing:-0.25px">PPV (Charge per delay)</div>
  <div class="sb" style="left:304px;top:412px;width:24px;height:23px;background:#e8e8e8"></div>
  <svg style="left:309px;top:420px" width="14" height="8"><path d="M0 0 H14 L7 8 Z" fill="#000"/></svg>
  <div class="cb" style="left:344px;top:413px"></div>
  <div class="t" style="left:370px;top:415px;letter-spacing:-0.25px">Log</div>
  <!-- color bar -->
  <div style="left:35px;top:442px;width:359px;height:32px;border:1px solid #2a2a2a;background:linear-gradient(90deg,#3a34c4 0%,#3a5ecc 8%,#3c9cd0 17%,#40ecd2 25%,#40e8a0 32%,#40e068 41%,#44e030 49%,#78e414 57%,#b6e41c 66%,#f4f000 75%,#ffc010 82%,#ff7c18 91%,#f23410 100%)"></div>
  <div style="left:35px;top:443px;width:359px;height:30px;background:repeating-linear-gradient(90deg,transparent 0,transparent 35px,rgba(80,90,60,0.55) 35px,rgba(80,90,60,0.55) 36px);background-position:1px 0"></div>
  <div class="t" style="left:40px;top:450px;color:#fff;font-weight:bold;font-size:17px">5.00</div>
  <div class="t" style="left:30px;top:450px;width:359px;text-align:center;color:#fff;font-weight:bold;font-size:17px">mm/s</div>
  <div class="t" style="left:33px;top:449px;width:354px;text-align:right;color:#fff;font-weight:bold;font-size:17px">100.00</div>
  <div class="cb" style="left:8px;top:449px"></div>
  <div class="cb" style="left:398px;top:449px"></div>
  <svg style="left:402px;top:453px" width="13" height="13" viewBox="0 0 13 13"><path d="M1.500 6 L5 10.500 L11.500 1.500" fill="none" stroke="#000" stroke-width="2.600"/></svg>
  <!-- tools -->
  <div style="left:10px;top:483px;width:403px;height:26px;border:1px solid #1a1a1a;border-bottom:2px solid #000"></div>
  <div class="t" style="left:14px;top:486px;font-weight:bold;font-size:17px">Tools</div>
  <div id="tools" style="left:10px;top:509px;width:403px;height:193px;border:1px solid #1a1a1a;border-top:none;overflow:hidden">
    <div class="btn" style="left:9px;top:4px;width:72px;height:72px;background:#f8f8f8;border-color:#c8b070"></div>
    <svg style="left:19px;top:15px" width="52" height="50" viewBox="0 0 52 50"><ellipse cx="27" cy="22" rx="24" ry="20.500" fill="#4a86c0"/><path d="M10 34 L10 47 L24 39 Z" fill="#4a86c0"/><path d="M19.500 16 a7 7 0 1 1 10.500 6 q-3 2 -3 5.500" fill="none" stroke="#f4f4f4" stroke-width="4.200"/><circle cx="26.800" cy="33.500" r="2.800" fill="#f4f4f4"/></svg>
    <div style="left:8px;top:85px;width:368px;height:2px;background:#fff"></div>
    <div class="t" style="left:15px;top:107px;font-size:17px">X :</div>
    <div class="t" style="left:15px;top:142px;font-size:17px">Y :</div>
    <div class="t" style="left:15px;top:176px;font-size:17px">Z :</div>
    <div class="sunk" style="left:43px;top:101px;width:145px;height:29px;background:#f0f0f0;border-width:2px"></div>
    <div class="sunk" style="left:43px;top:136px;width:145px;height:29px;background:#f0f0f0;border-width:2px"></div>
    <div class="sunk" style="left:43px;top:171px;width:145px;height:29px;background:#f0f0f0;border-width:2px"></div>
    <div class="t" style="left:43px;top:108px;width:138px;text-align:right">619 184.91</div>
    <div class="t" style="left:43px;top:143px;width:138px;text-align:right">7 764 004.27</div>
    <div class="t" style="left:43px;top:177px;width:138px;text-align:right">1 396.80</div>
    <div class="t" style="left:200px;top:108px;font-size:15px">+</div>
    <div class="t" style="left:200px;top:143px;font-size:15px">+</div>
    <div class="t" style="left:200px;top:176px;font-size:15px">+</div>
    <div class="sunk" style="left:228px;top:103px;width:133px;height:29px;background:#fff;border-width:2px"></div>
    <div class="sunk" style="left:228px;top:138px;width:133px;height:29px;background:#fff;border-width:2px"></div>
    <div class="sunk" style="left:228px;top:172px;width:133px;height:29px;background:#fff;border-width:2px"></div>
    <div class="t" style="left:228px;top:110px;width:127px;text-align:right">0.00</div>
    <div class="t" style="left:228px;top:144px;width:127px;text-align:right">0.00</div>
    <div class="t" style="left:228px;top:177px;width:127px;text-align:right">0.00</div>
    <div class="dither" style="left:376px;top:0px;width:26px;height:192px"></div>
    <div class="sb" style="left:376px;top:0px;width:25px;height:25px"></div>
    <div class="sb" style="left:376px;top:26px;width:25px;height:46px"></div>
    <div class="sb" style="left:376px;top:168px;width:25px;height:24px"></div>
    <svg style="left:384px;top:9px" width="10" height="6"><path d="M0 6 H10 L5 0 Z" fill="#000"/></svg>
    <svg style="left:384px;top:178px" width="10" height="6"><path d="M0 0 H10 L5 6 Z" fill="#000"/></svg>
  </div>
  <!-- grip -->
  <svg style="left:409px;top:727px" width="12" height="12" viewBox="0 0 12 12" fill="#bdbdbd"><rect x="9" y="0" width="2" height="2"/><rect x="6" y="3" width="2" height="2"/><rect x="9" y="3" width="2" height="2"/><rect x="3" y="6" width="2" height="2"/><rect x="6" y="6" width="2" height="2"/><rect x="9" y="6" width="2" height="2"/><rect x="0" y="9" width="2" height="2"/><rect x="3" y="9" width="2" height="2"/><rect x="6" y="9" width="2" height="2"/><rect x="9" y="9" width="2" height="2"/></svg>
</div>
<!--PCWIN-END-->

</div>
</body></html>
